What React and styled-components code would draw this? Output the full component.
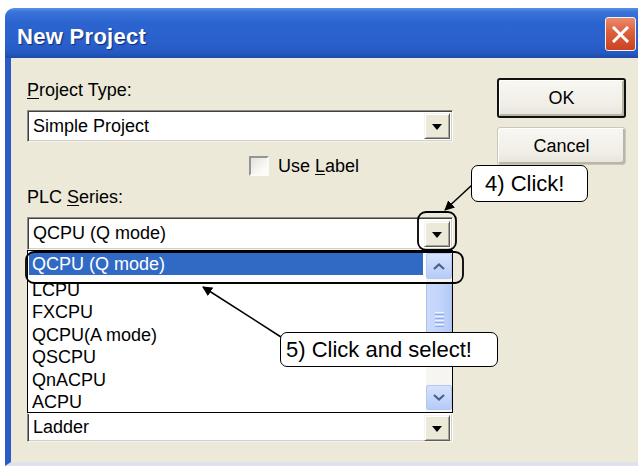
import React from 'react';
import styled, { createGlobalStyle } from 'styled-components';

const Global = createGlobalStyle`
  html, body { margin: 0; padding: 0; background: #fff; }
  #root { width: 638px; height: 466px; overflow: hidden; }
`;

const Page = styled.div`
  position: relative;
  width: 638px;
  height: 466px;
  box-sizing: border-box;
  padding: 8px 0 0 5px;
  background: #fff;
  font-family: "Liberation Sans", Arial, sans-serif;
  font-size: 18px;
  color: #000;
`;

const Window = styled.div`
  display: flex;
  flex-direction: column;
  height: 100%;
`;

const TitleBar = styled.div`
  flex: none;
  height: 50px;
  display: flex;
  align-items: center;
  justify-content: space-between;
  padding: 0 2px 0 12px;
  border-top-left-radius: 9px;
  background: linear-gradient(180deg, #5a90e6 0%, #3a73da 8%, #2c64cf 30%, #2a60cb 70%, #2559c2 90%, #1c4aa8 100%);
`;

const TitleText = styled.span`
  margin-top: 7px;
  color: #fff;
  font-weight: bold;
  font-size: 22px;
  letter-spacing: 0.3px;
  text-shadow: 1px 1px 1px #0f2c7a;
`;

const CloseBtn = styled.div`
  width: 31px;
  height: 34px;
  margin-top: 2px;
  box-sizing: border-box;
  display: flex;
  align-items: center;
  justify-content: center;
  border: 1px solid #f4f4f4;
  border-radius: 3px;
  background: linear-gradient(180deg, #ea8a6c 0%, #dc5f3c 45%, #c9431f 100%);
`;

const Client = styled.div`
  flex: 1;
  display: flex;
  gap: 44px;
  padding: 20px 12px 0 16px;
  background: #ece9d8;
  border-left: 6px solid #2a5cc6;
  border-bottom: 4px solid #dfe2ec;
`;

const FormColumn = styled.div`
  width: 426px;
  display: flex;
  flex-direction: column;
  padding-top: 2px;
`;

const Label = styled.div`
  height: 20px;
  line-height: 20px;
  margin-top: ${p => p.$mt || 0}px;
  white-space: nowrap;
`;

const Mn = styled.span`
  text-decoration: underline;
  text-underline-offset: 2px;
`;

const Combo = styled.div`
  margin-top: ${p => p.$mt || 0}px;
  height: ${p => p.$h}px;
  box-sizing: border-box;
  display: flex;
  align-items: center;
  background: #fff;
  border: 1px solid;
  border-color: ${p => (p.$open ? 'transparent' : '#8c8c8c')} #fff #f4f3ee #8c8c8c;
  box-shadow: inset 1px ${p => (p.$open ? 0 : 1)}px 0 #404040, inset -1px -1px 0 #d4d0c8;
  padding: 0 2px 0 5px;
`;

const ComboText = styled.span`
  flex: 1;
  white-space: nowrap;
`;

const DropButton = styled.div`
  width: 26px;
  height: ${p => p.$h || 26}px;
  box-sizing: border-box;
  display: flex;
  align-items: center;
  justify-content: center;
  background: #ece9d8;
  border: 1px solid;
  border-color: #f4f3ee #5c5c5c #5c5c5c #f4f3ee;
  box-shadow: inset 1px 1px 0 #fff, inset -1px -1px 0 #a7a396;
`;

const Triangle = styled.span`
  width: 0;
  height: 0;
  border-left: 5px solid transparent;
  border-right: 5px solid transparent;
  border-top: 6px solid #000;
  margin-top: 2px;
`;

const CheckRow = styled.div`
  margin-top: 13px;
  height: 22px;
  display: flex;
  align-items: center;
  gap: 9px;
  padding-left: 222px;
`;

const CheckBox = styled.span`
  width: 20px;
  height: 20px;
  box-sizing: border-box;
  border: 2px solid;
  border-color: #959595 #fbfbf8 #fbfbf8 #959595;
  background: linear-gradient(135deg, #e2e0d8 0%, #f7f6f2 60%, #fff 100%);
`;

const DropList = styled.div`
  height: 163px;
  box-sizing: border-box;
  display: flex;
  border: 1px solid #000;
  background: #fff;
`;

const Items = styled.div`
  flex: 1;
  padding: 2px 3px 0 1px;
`;

const Item = styled.div`
  height: ${p => (p.$sel ? 22 : 22.4)}px;
  margin-bottom: ${p => (p.$sel ? 3 : 0)}px;
  line-height: ${p => (p.$sel ? 22 : 24)}px;
  padding-left: 3px;
  white-space: nowrap;
  background: ${p => (p.$sel ? '#316ac5' : 'transparent')};
  color: ${p => (p.$sel ? '#fff' : '#000')};
`;

const ScrollBar = styled.div`
  width: 26px;
  display: flex;
  flex-direction: column;
  padding: 2px 0;
  background: #f7f5f1;
`;

const ScrollBtn = styled.div`
  height: ${p => p.$h}px;
  box-sizing: border-box;
  display: flex;
  align-items: center;
  justify-content: center;
  border: 1px solid #b3c7f2;
  border-radius: 2px;
  background: linear-gradient(180deg, #d6e2fd 0%, #c3d5fb 60%, #b5cbf7 100%);
`;

const Thumb = styled.div`
  margin-top: 4px;
  height: 72px;
  box-sizing: border-box;
  display: flex;
  flex-direction: column;
  align-items: center;
  justify-content: center;
  gap: 1px;
  border: 1px solid #a9c0f0;
  border-radius: 2px;
  background: linear-gradient(90deg, #cbdafc 0%, #c0d3fa 60%, #b3c9f6 100%);
`;

const Grip = styled.span`
  width: 9px;
  height: 1px;
  background: ${p => (p.$dark ? '#8eabea' : '#eef4ff')};
`;

const Spacer = styled.div`
  flex: 1;
`;

const ButtonColumn = styled.div`
  display: flex;
  flex-direction: column;
  align-items: flex-end;
  gap: 9px;
`;

const Button = styled.div`
  width: 129px;
  height: ${p => (p.$default ? 40 : 38)}px;
  box-sizing: border-box;
  display: flex;
  align-items: center;
  justify-content: center;
  border-radius: 3px;
  border: ${p => (p.$default ? '2px solid #111' : '1px solid #cbc7ba')};
  background: linear-gradient(180deg, #f8f7f2 0%, #f0eee6 70%, #e6e3d8 100%);
  box-shadow: inset 1px 1px 0 #fff, inset -2px -2px 0 #b9b5a7;
`;

const Callout = styled.div`
  position: absolute;
  left: ${p => p.$x}px;
  top: ${p => p.$y}px;
  width: ${p => p.$w}px;
  height: ${p => p.$h}px;
  box-sizing: border-box;
  display: flex;
  align-items: center;
  padding-left: ${p => p.$pl}px;
  border: 1px solid #000;
  border-radius: 7px;
  background: #fff;
  font-size: 22px;
  white-space: nowrap;
`;

const Overlay = styled.svg`
  position: absolute;
  left: 0;
  top: 0;
  pointer-events: none;
`;

const Chevron = ({ up }) => (
  <svg width="12" height="7" viewBox="0 0 12 7">
    <path
      d={up ? 'M1 6 L6 1.5 L11 6' : 'M1 1 L6 5.5 L11 1'}
      fill="none"
      stroke="#4d6185"
      strokeWidth="2.2"
    />
  </svg>
);

const items = ['LCPU', 'FXCPU', 'QCPU(A mode)', 'QSCPU', 'QnACPU', 'ACPU'];

export default function App() {
  return (
    <>
      <Global />
      <Page>
        <Window>
          <TitleBar>
            <TitleText>New Project</TitleText>
            <CloseBtn>
              <svg width="17" height="17" viewBox="0 0 17 17">
                <path d="M2 2 L15 15 M15 2 L2 15" stroke="#fff" strokeWidth="3" strokeLinecap="square" />
              </svg>
            </CloseBtn>
          </TitleBar>
          <Client>
            <FormColumn>
              <Label>
                <Mn>P</Mn>roject Type:
              </Label>
              <Combo $mt={10} $h={32}>
                <ComboText>Simple Project</ComboText>
                <DropButton>
                  <Triangle />
                </DropButton>
              </Combo>
              <CheckRow>
                <CheckBox />
                <span>
                  Use <Mn>L</Mn>abel
                </span>
              </CheckRow>
              <Label $mt={10}>
                PLC <Mn>S</Mn>eries:
              </Label>
              <Combo $mt={10} $h={33}>
                <ComboText>QCPU (Q mode)</ComboText>
                <DropButton>
                  <Triangle />
                </DropButton>
              </Combo>
              <DropList>
                <Items>
                  <Item $sel>QCPU (Q mode)</Item>
                  {items.map(t => (
                    <Item key={t}>{t}</Item>
                  ))}
                </Items>
                <ScrollBar>
                  <ScrollBtn $h={26}>
                    <Chevron up />
                  </ScrollBtn>
                  <Thumb>
                    <Grip />
                    <Grip $dark />
                    <Grip />
                    <Grip $dark />
                    <Grip />
                    <Grip $dark />
                    <Grip />
                    <Grip $dark />
                  </Thumb>
                  <Spacer />
                  <ScrollBtn $h={25}>
                    <Chevron />
                  </ScrollBtn>
                </ScrollBar>
              </DropList>
              <Combo $h={29} $open>
                <ComboText>Ladder</ComboText>
                <DropButton $h={26}>
                  <Triangle />
                </DropButton>
              </Combo>
            </FormColumn>
            <ButtonColumn>
              <Button $default>OK</Button>
              <Button>Cancel</Button>
            </ButtonColumn>
          </Client>
        </Window>

        <Overlay width="638" height="466" viewBox="0 0 638 466">
          <defs>
            <marker id="ah" viewBox="0 0 10 10" refX="9" refY="5" markerWidth="10" markerHeight="10" markerUnits="userSpaceOnUse" orient="auto">
              <path d="M0 0 L10 5 L0 10 Z" fill="#000" />
            </marker>
          </defs>
          <rect x="418" y="212" width="38" height="38" rx="8" fill="none" stroke="#000" strokeWidth="1.8" />
          <rect x="26" y="252" width="437" height="31" rx="8" fill="none" stroke="#000" strokeWidth="1.8" />
          <line x1="472" y1="185" x2="445" y2="210" stroke="#000" strokeWidth="1.5" markerEnd="url(#ah)" />
          <line x1="281" y1="337" x2="203" y2="287" stroke="#000" strokeWidth="1.5" markerEnd="url(#ah)" />
        </Overlay>

        <Callout $x={471} $y={165} $w={117} $h={37} $pl={13}>
          4) Click!
        </Callout>
        <Callout $x={280} $y={332} $w={218} $h={35} $pl={5}>
          5) Click and select!
        </Callout>
      </Page>
    </>
  );
}
